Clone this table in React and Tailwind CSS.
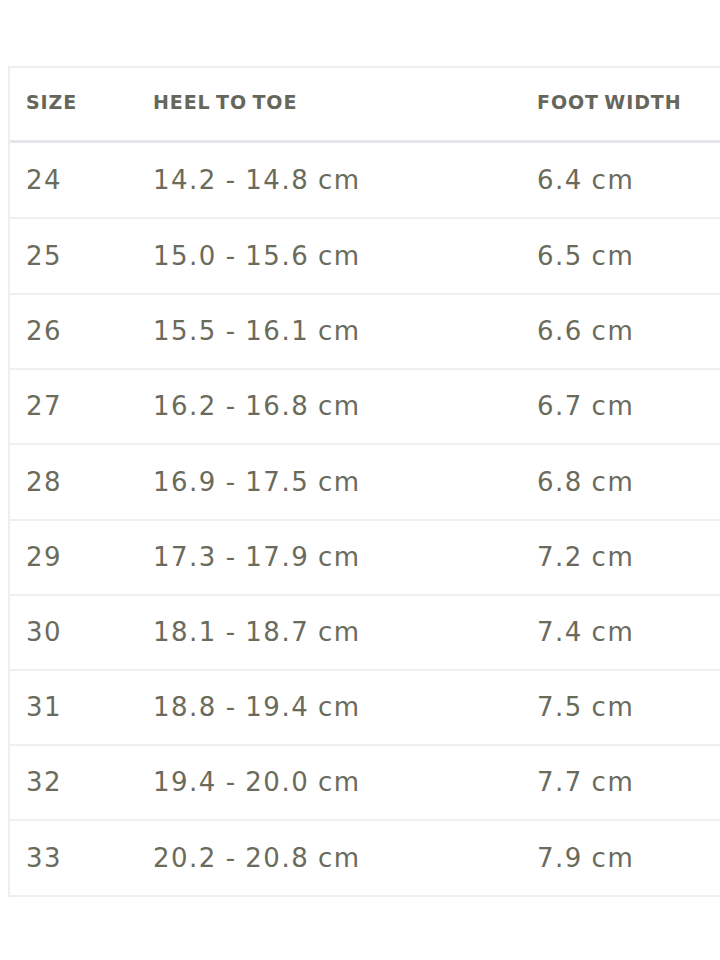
import React from "react";

const rows = [
  ["24", "14.2 - 14.8 cm", "6.4 cm", "h-[76px]"],
  ["25", "15.0 - 15.6 cm", "6.5 cm", "h-[76px]"],
  ["26", "15.5 - 16.1 cm", "6.6 cm", "h-[75px]"],
  ["27", "16.2 - 16.8 cm", "6.7 cm", "h-[75px]"],
  ["28", "16.9 - 17.5 cm", "6.8 cm", "h-[76px]"],
  ["29", "17.3 - 17.9 cm", "7.2 cm", "h-[75px]"],
  ["30", "18.1 - 18.7 cm", "7.4 cm", "h-[75px]"],
  ["31", "18.8 - 19.4 cm", "7.5 cm", "h-[75px]"],
  ["32", "19.4 - 20.0 cm", "7.7 cm", "h-[75px]"],
  ["33", "20.2 - 20.8 cm", "7.9 cm", "h-[76px]"],
];

export default function App() {
  return (
    <div className="w-[720px] h-[960px] overflow-hidden bg-white pt-[66px] pl-[8px]" style={{ fontFamily: '"DejaVu Sans", sans-serif' }}>
      <div className="w-[780px] border-t-2 border-l-2 border-[#eeeeee]">
        <div className="grid grid-cols-[126px_384px_1fr] h-[75px] items-center border-b-[3px] border-[#e4e6ec] text-[#66665a] font-bold text-[19px] tracking-[0.9px] [word-spacing:-2px] pb-[3px]">
          <div className="pl-[16px]">SIZE</div>
          <div className="pl-[17px]">HEEL TO TOE</div>
          <div className="pl-[17px]">FOOT WIDTH</div>
        </div>
        {rows.map((r) => (
          <div key={r[0]} className={`grid grid-cols-[126px_384px_1fr] ${r[3]} items-center border-b-2 border-[#efefef] text-[#6b6b5c] text-[26px] tracking-[1.5px] [word-spacing:-1px]`}>
            <div className="pl-[16px]">{r[0]}</div>
            <div className="pl-[17px]">{r[1]}</div>
            <div className="pl-[17px]">{r[2]}</div>
          </div>
        ))}
      </div>
    </div>
  );
}
